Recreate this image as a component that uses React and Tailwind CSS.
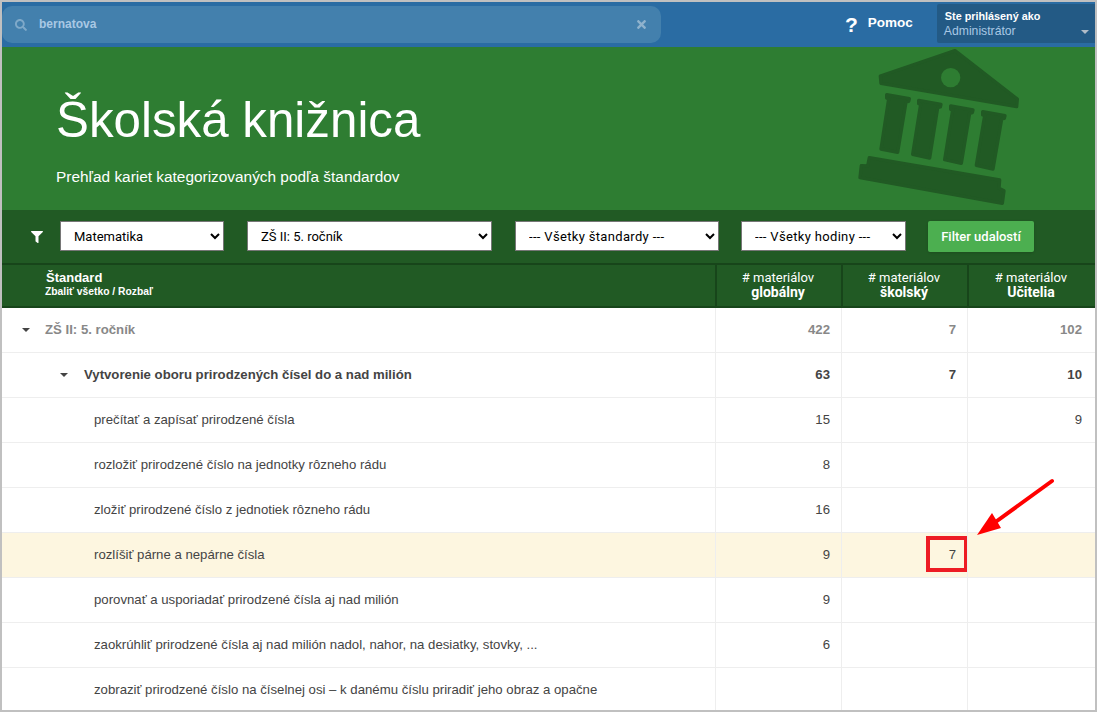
import React from "react";
import { FaFilter, FaSearch, FaTimes } from "react-icons/fa";

const rows = [
  { label: "prečítať a zapísať prirodzené čísla", a: "15", c: "9" },
  { label: "rozložiť prirodzené číslo na jednotky rôzneho rádu", a: "8" },
  { label: "zložiť prirodzené číslo z jednotiek rôzneho rádu", a: "16" },
  { label: "rozlíšiť párne a nepárne čísla", a: "9", b: "7", hl: true },
  { label: "porovnať a usporiadať prirodzené čísla aj nad milión", a: "9" },
  { label: "zaokrúhliť prirodzené čísla aj nad milión nadol, nahor, na desiatky, stovky, ...", a: "6" },
  { label: "zobraziť prirodzené číslo na číselnej osi – k danému číslu priradiť jeho obraz a opačne" },
];

function Caret({ className }) {
  return <span className={"w-0 h-0 border-x-[4px] border-x-transparent border-t-[4px] " + className} />;
}

function NumCell({ value, last, box }) {
  return (
    <div className={"relative h-full flex items-center justify-end border-l border-[#eeeeee] " + (last ? "w-[128px] pr-[13px]" : "w-[126px] pr-[11px]")}>
      {value}
      {box && <span className="absolute left-[84px] top-[3px] w-[42px] h-[36px] border-4 border-[#ed1c24]" />}
    </div>
  );
}

function Row({ children, a, b, c, hl, className, box }) {
  return (
    <div className={"flex h-[45px] shrink-0 border-b border-[#eeeeee] " + (hl ? "bg-[#fdf6e0] " : "") + className}>
      <div className="flex-1 h-full flex items-center min-w-0">{children}</div>
      <NumCell value={a} />
      <NumCell value={b} box={box} />
      <NumCell value={c} last />
    </div>
  );
}

function HeadCell({ sub, last }) {
  return (
    <div className={"h-full flex flex-col items-center justify-center pb-[2px] pr-[2px] border-l-2 border-[#17451a] font-['Roboto',sans-serif] text-white leading-[15px] " + (last ? "w-[128px]" : "w-[126px]")}>
      <span className="text-[13px]">{"# materiálov"}</span>
      <span className="text-[14px] font-bold">{sub}</span>
    </div>
  );
}

function Building() {
  return (
    <svg viewBox="0 0 891 630" className="absolute left-[798px] top-[-47px] w-[297px] h-[210px]" fill="#215a24" stroke="#215a24" strokeWidth="10" strokeLinejoin="round">
      <path d="M465 152 L241 228 L243 250 L650 320 L652 297 Z" />
      <circle cx="452" cy="233" r="29" fill="#2e7d32" stroke="none" />
      <path d="M260 284 L328 296 L326 304 L318 306 L293 457 L243 447 L266 297 L260 294 Z" />
      <path d="M356 301 L423 313 L421 321 L413 323 L389 474 L338 463 L362 313 L356 311 Z" />
      <path d="M452 318 L519 330 L517 338 L509 340 L484 490 L434 479 L458 330 L452 328 Z" />
      <path d="M548 335 L615 347 L613 355 L605 357 L579 507 L529 496 L554 347 L548 345 Z" />
      <path d="M208 473 L599 540 L597 565 L612 572 L607 610 L180 533 L184 497 L203 498 Z" />
    </svg>
  );
}

export default function App() {
  return (
    <div className="relative w-[1097px] h-[712px] overflow-hidden border-2 border-[#c0c0c0] bg-white font-['Liberation_Sans',Arial,sans-serif] text-[13.2px] text-[#444444] flex flex-col">
      {/* top bar */}
      <div className="h-[45px] shrink-0 bg-[#2a6ca3] flex items-center">
        <div className="w-[659px] h-[37px] rounded-[10px] bg-[#4380ad] flex items-center pl-[13px] pr-[13px] text-[12px] text-[#a9c8e4]">
          <FaSearch className="w-[12px] h-[12px] text-[#7fa9c9]" />
          <span className="ml-[12px] mb-[2px] font-bold flex-1">bernatova</span>
          <FaTimes className="w-[13px] h-[13px] text-[#8fb2cd]" />
        </div>
        <span className="ml-[184px] text-[21px] font-bold text-white leading-none">?</span>
        <span className="ml-[10px] mb-[2px] text-[13.5px] font-bold text-white">Pomoc</span>
        <div className="ml-[24px] w-[158px] h-[39px] mt-[-2px] bg-[#235a85] rounded-l-[2px] pl-[8px] pt-[5px] relative leading-[15px]">
          <div className="text-[10.8px] font-bold text-white">Ste prihlásený ako</div>
          <div className="text-[12.2px] text-[#a9c8e4] ml-[-1px]">Administrátor</div>
          <Caret className="absolute right-[6px] bottom-[9px] border-t-[#b0bcc8]" />
        </div>
      </div>

      {/* hero */}
      <div className="relative h-[163px] shrink-0 bg-[#2e7d32] overflow-hidden text-white pl-[54px]">
        <Building />
        <h1 className="pt-[44px] text-[49.3px] leading-[58px]">Školská knižnica</h1>
        <p className="mt-[19px] text-[15.4px] leading-[18px]">Prehľad kariet kategorizovaných podľa štandardov</p>
      </div>

      {/* filters */}
      <div className="h-[53px] shrink-0 bg-[#215a24] flex items-center pl-[29px] font-['Roboto',sans-serif] text-[13px] text-black">
        <FaFilter className="w-[12px] h-[12px] text-white" />
        <select className="ml-[17px] mb-[1px] w-[164px] h-[30px] bg-white border border-[#767676] px-[9px]"><option>Matematika</option></select>
        <select className="ml-[23px] mb-[1px] w-[245px] h-[30px] bg-white border border-[#767676] px-[9px]"><option>ZŠ II: 5. ročník</option></select>
        <select className="ml-[23px] mb-[1px] w-[204px] h-[30px] bg-white border border-[#767676] px-[9px] tracking-[0.33px]"><option>--- Všetky štandardy ---</option></select>
        <select className="ml-[22px] mb-[1px] w-[165px] h-[30px] bg-white border border-[#767676] px-[9px] tracking-[0.33px]"><option>--- Všetky hodiny ---</option></select>
        <button className="ml-[22px] w-[106px] h-[31px] rounded-[2px] bg-[#4caf50] text-white text-[13px] font-medium shadow-sm">Filter udalostí</button>
      </div>

      {/* table head */}
      <div className="h-[45px] shrink-0 bg-[#215a24] border-y-2 border-[#17451a] flex">
        <div className="flex-1 pl-[44px] pt-[5px] text-white font-bold">
          <div className="text-[13px] leading-[15px]">Štandard</div>
          <div className="text-[10.3px] leading-[14px] ml-[-1px]">Zbaliť všetko / Rozbaľ</div>
        </div>
        <HeadCell sub="globálny" />
        <HeadCell sub="školský" />
        <HeadCell sub="Učitelia" last />
      </div>

      {/* table body */}
      <Row a="422" b="7" c="102" className="font-bold text-[#888888]">
        <Caret className="ml-[20px] mr-[15px] border-t-[#444444]" />
        ZŠ II: 5. ročník
      </Row>
      <Row a="63" b="7" c="10" className="font-bold">
        <Caret className="ml-[58px] mr-[16px] border-t-[#444444]" />
        Vytvorenie oboru prirodzených čísel do a nad milión
      </Row>
      {rows.map((r) => (
        <Row key={r.label} a={r.a} b={r.b} c={r.c} hl={r.hl} box={r.hl}>
          <span className="pl-[92px] whitespace-nowrap">{r.label}</span>
        </Row>
      ))}

      {/* annotation arrow */}
      <svg viewBox="0 0 1097 712" className="absolute left-[-2px] top-[-2px] w-[1097px] h-[712px] pointer-events-none" fill="none">
        <line x1="1052" y1="481" x2="990" y2="526" stroke="#ff0000" strokeWidth="4" strokeLinecap="round" />
        <polygon points="977,535 992,513 1001,528" fill="#ff0000" />
      </svg>
    </div>
  );
}
